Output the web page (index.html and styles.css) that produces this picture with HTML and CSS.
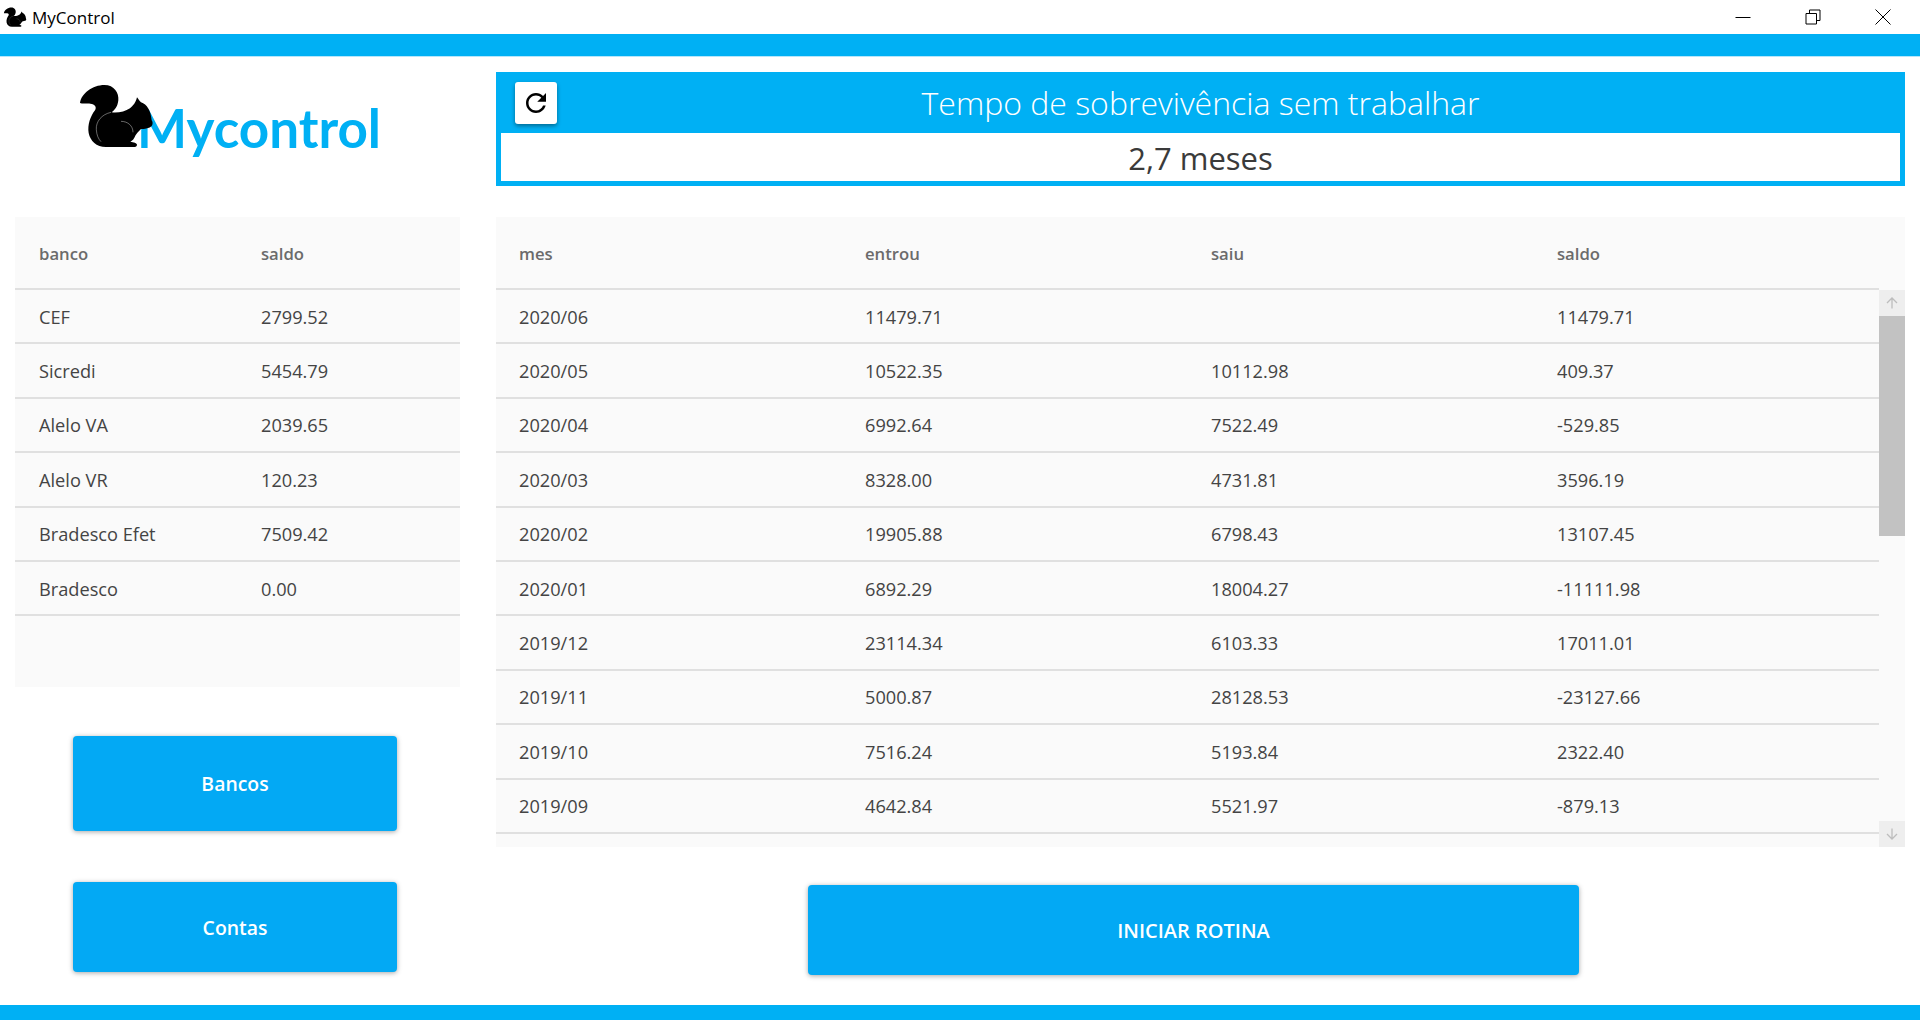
FILE: index.html
```html
<!DOCTYPE html>
<html lang="en">
<head>
    <meta charset="UTF-8">
    <title>MyControl</title>
    <link rel="stylesheet" href="styles.css">
</head>
<body>
    <svg class="defs" width="0" height="0">
        <symbol id="squirrel" viewBox="50 40 230 195">
            <path d="M57 100C60 72 95 46 130 46C160 46 174 70 172 92C170 112 160 122 152 128C172 130 192 126 207 116C216 108 224 100 228 83C232 88 236 94 240 98C258 104 270 124 272 152C278 160 274 172 264 174C254 177 246 179 240 178C232 186 224 194 220 204C216 212 210 214 208 216C218 217 228 220 228 225C228 231 222 232 216 232L135 232C106 232 88 214 83 190C79 166 88 140 102 122C108 112 102 104 88 102C78 100 66 104 57 100Z" fill="#000"/>
            <path d="M150 128C122 134 104 156 106 180C107 196 112 208 120 216M180 155C200 155 216 168 216 188" fill="none" stroke="#fff" stroke-width="1.5" opacity=".8"/>
        </symbol>
    </svg>

    <div class="titlebar">
        <svg class="titlebar-icon"><use href="#squirrel"/></svg>
        <span class="titlebar-name">MyControl</span>
        <div class="winbtns">
            <svg class="winbtn" width="16" height="16" viewBox="0 0 16 16"><path d="M0.5 8.5H15.5" stroke="#000" fill="none"/></svg>
            <svg class="winbtn" width="16" height="16" viewBox="0 0 16 16"><path d="M1 4.5H11.5V15H1ZM4.5 4.5V1H15V11.5H11.5" stroke="#000" fill="none"/></svg>
            <svg class="winbtn" width="16" height="16" viewBox="0 0 16 16"><path d="M0.5 0.5L15.5 15.5M15.5 0.5L0.5 15.5" stroke="#000" fill="none"/></svg>
        </div>
    </div>
    <div class="topbar"></div>

    <div class="content">
        <div class="left">
            <div class="logo">
                <span class="logo-text">Mycontrol</span>
                <svg class="logo-squirrel"><use href="#squirrel"/></svg>
            </div>

            <div class="panel bank-table">
                <div class="row head bank-row"><span>banco</span><span>saldo</span></div>
                <div class="row bank-row"><span>CEF</span><span>2799.52</span></div>
                <div class="row bank-row"><span>Sicredi</span><span>5454.79</span></div>
                <div class="row bank-row"><span>Alelo VA</span><span>2039.65</span></div>
                <div class="row bank-row"><span>Alelo VR</span><span>120.23</span></div>
                <div class="row bank-row"><span>Bradesco Efet</span><span>7509.42</span></div>
                <div class="row bank-row"><span>Bradesco</span><span>0.00</span></div>
            </div>

            <button class="btn btn-bancos">Bancos</button>
            <button class="btn btn-contas">Contas</button>
        </div>

        <div class="right">
            <div class="survival">
                <div class="survival-head">
                    <button class="refresh">
                        <svg width="30" height="30" viewBox="0 0 24 24"><path d="M17.65 6.35C16.2 4.9 14.21 4 12 4c-4.42 0-7.99 3.58-7.99 8s3.57 8 7.99 8c3.73 0 6.84-2.55 7.73-6h-2.08c-.82 2.33-3.04 4-5.65 4-3.31 0-6-2.69-6-6s2.69-6 6-6c1.66 0 3.14.69 4.22 1.78L13 11h7V4l-2.35 2.35z"/></svg>
                    </button>
                    <span>Tempo de sobrevivência sem trabalhar</span>
                </div>
                <div class="survival-value">2,7 meses</div>
            </div>

            <div class="panel month-table">
                <div class="month-rows">
                    <div class="row head month-row"><span>mes</span><span>entrou</span><span>saiu</span><span>saldo</span></div>
                    <div class="row month-row"><span>2020/06</span><span>11479.71</span><span></span><span>11479.71</span></div>
                    <div class="row month-row"><span>2020/05</span><span>10522.35</span><span>10112.98</span><span>409.37</span></div>
                    <div class="row month-row"><span>2020/04</span><span>6992.64</span><span>7522.49</span><span>-529.85</span></div>
                    <div class="row month-row"><span>2020/03</span><span>8328.00</span><span>4731.81</span><span>3596.19</span></div>
                    <div class="row month-row"><span>2020/02</span><span>19905.88</span><span>6798.43</span><span>13107.45</span></div>
                    <div class="row month-row"><span>2020/01</span><span>6892.29</span><span>18004.27</span><span>-11111.98</span></div>
                    <div class="row month-row"><span>2019/12</span><span>23114.34</span><span>6103.33</span><span>17011.01</span></div>
                    <div class="row month-row"><span>2019/11</span><span>5000.87</span><span>28128.53</span><span>-23127.66</span></div>
                    <div class="row month-row"><span>2019/10</span><span>7516.24</span><span>5193.84</span><span>2322.40</span></div>
                    <div class="row month-row"><span>2019/09</span><span>4642.84</span><span>5521.97</span><span>-879.13</span></div>
                </div>
                <div class="scrollbar">
                    <div class="scroll-arrow">
                        <svg width="12" height="12" viewBox="0 0 12 12"><path d="M6 11.5V1M1 6L6 1L11 6" fill="none" stroke="#bdbdbd" stroke-width="1.3"/></svg>
                    </div>
                    <div class="scroll-track"><div class="scroll-thumb"></div></div>
                    <div class="scroll-arrow">
                        <svg width="12" height="12" viewBox="0 0 12 12"><path d="M6 0.5V11M1 6L6 11L11 6" fill="none" stroke="#bdbdbd" stroke-width="1.3"/></svg>
                    </div>
                </div>
            </div>

            <button class="btn btn-start">INICIAR ROTINA</button>
        </div>
    </div>

    <div class="bottombar"></div>
</body>
</html>
```

FILE: styles.css
```css
* {
    box-sizing: border-box;
    font-family: "Open Sans", "Noto Sans", sans-serif;
}

html, body {
    height: 100%;
}

body {
    background-color: #fff;
    color: #333;
    margin: 0;
    display: flex;
    flex-direction: column;
    overflow: hidden;
}

.defs {
    position: absolute;
}

/* window chrome */
.titlebar {
    height: 34px;
    display: flex;
    align-items: center;
    flex-shrink: 0;
}

.titlebar-icon {
    width: 24px;
    height: 20px;
    margin-left: 3px;
}

.titlebar-name {
    margin-left: 5px;
    font-size: 17px;
    color: #000;
}

.winbtns {
    margin-left: auto;
    margin-right: 29px;
    display: flex;
    gap: 54px;
}

.topbar {
    height: 23px;
    flex-shrink: 0;
    background-color: #00b0f4;
    border-bottom: 1px solid #b5e6fb;
}

.bottombar {
    height: 15px;
    flex-shrink: 0;
    background-color: #00b0f4;
}

.content {
    flex: 1;
    display: flex;
    min-height: 0;
}

/* left column */
.left {
    width: 496px;
    padding-left: 15px;
    flex-shrink: 0;
}

.logo {
    position: relative;
    height: 160px;
}

.logo-text {
    position: absolute;
    left: 122px;
    top: 39px;
    font-family: Lato, sans-serif;
    font-size: 53px;
    line-height: 64px;
    font-weight: 700;
    color: #00b0f4;
}

.logo-squirrel {
    position: absolute;
    left: 60px;
    top: 26px;
    width: 82px;
    height: 65px;
}

.panel {
    background-color: #fafafa;
}

.bank-table {
    width: 445px;
    height: 470px;
}

.row {
    display: grid;
    height: 54.4px;
    padding-top: 1px;
    align-items: center;
    border-bottom: 2px solid #e0e0e0;
    font-size: 18.2px;
    color: #444;
}

.row.head {
    height: 73px;
    font-size: 16.7px;
    font-weight: 600;
    color: #6b6b6b;
}

.bank-row {
    grid-template-columns: 222px 1fr;
    padding-left: 24px;
}

.btn {
    display: block;
    border: none;
    border-radius: 4px;
    background-color: #03a9f4;
    color: #fff;
    font-size: 19.4px;
    font-weight: 600;
    box-shadow: 0 1px 5px rgba(0, 0, 0, .35);
}

.btn-bancos {
    width: 324px;
    height: 95px;
    margin: 49px 0 0 58px;
}

.btn-contas {
    width: 324px;
    height: 90px;
    margin: 51px 0 0 58px;
}

/* right column */
.right {
    flex: 1;
    padding: 15px 15px 0 0;
    min-width: 0;
}

.survival {
    height: 114px;
    background-color: #00b0f4;
    padding: 0 5px 5px;
    display: flex;
    flex-direction: column;
}

.survival-head {
    height: 61px;
    position: relative;
    display: flex;
    align-items: center;
    justify-content: center;
    color: #fff;
    font-size: 32px;
    font-weight: 300;
}

.refresh {
    position: absolute;
    left: 14px;
    top: 10px;
    width: 42px;
    height: 42px;
    padding: 0;
    border: none;
    border-radius: 3px;
    background-color: #fff;
    box-shadow: 0 2px 4px rgba(0, 0, 0, .4);
    display: flex;
    align-items: center;
    justify-content: center;
}

.survival-value {
    flex: 1;
    background-color: #fff;
    display: flex;
    align-items: center;
    justify-content: center;
    padding-top: 2px;
    font-size: 31px;
    font-weight: 400;
    color: #3a3a3a;
}

.month-table {
    height: 630px;
    margin-top: 31px;
    display: flex;
}

.month-rows {
    flex: 1;
    min-width: 0;
}

.month-row {
    grid-template-columns: repeat(4, 346px);
    padding-left: 23px;
}

.scrollbar {
    width: 26px;
    margin-top: 73px;
    display: flex;
    flex-direction: column;
}

.scroll-arrow {
    height: 26px;
    background-color: #eee;
    display: flex;
    align-items: center;
    justify-content: center;
}

.scroll-track {
    flex: 1;
}

.scroll-thumb {
    height: 220px;
    background-color: #c2c2c2;
}

.btn-start {
    width: 771px;
    height: 90px;
    margin: 38px 0 0 312px;
    font-size: 20px;
}
```
